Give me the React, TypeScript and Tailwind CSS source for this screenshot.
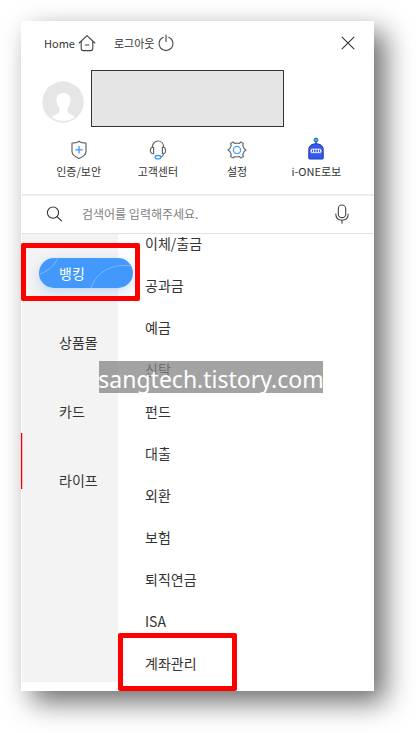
import React from "react";

const categories = ["뱅킹", "상품몰", "카드", "라이프"];

const menuItems = [
  "이체/출금",
  "공과금",
  "예금",
  "신탁",
  "펀드",
  "대출",
  "외환",
  "보험",
  "퇴직연금",
  "ISA",
  "계좌관리",
];

function HomeIcon() {
  return (
    <svg viewBox="0 0 18 18" className="h-[18px] w-[18px]" fill="none" stroke="#444" strokeWidth="1.100" strokeLinecap="round" strokeLinejoin="round">
      <path d="M1.200 9 9 1.600 16.800 9M3.200 7.400v7.200q0 2 2 2h7.600q2 0 2-2V7.400M7.200 11h3.800" />
    </svg>
  );
}

function PowerIcon() {
  return (
    <svg viewBox="0 0 18 18" className="h-[18px] w-[18px]" fill="none" stroke="#444" strokeWidth="1.100" strokeLinecap="round">
      <path d="M9 1v6.400M6.200 3.200a7 7 0 1 0 5.600 0" />
    </svg>
  );
}

function CloseIcon() {
  return (
    <svg viewBox="0 0 14 14" className="h-3.5 w-3.5" fill="none" stroke="#333" strokeWidth="1.100">
      <path d="m.8.8 12.400 12.400M13.200.8.8 13.200" />
    </svg>
  );
}

function Avatar() {
  return (
    <svg viewBox="0 0 42 42" className="h-[42px] w-[42px] shrink-0" aria-hidden="true">
      <circle cx="21" cy="21" r="20.700" fill="#e6e6e6" />
      <path
        d="M21.500 12c4.600 0 7 2.800 7 7 0 3.600-1 6-3 7.800v3.200c0 2 1.600 2.800 3.400 3.400 2 .8 3.200 1.400 4.200 2.600a19 19 0 0 1-23.200 0c1-1.200 2.200-1.800 4.200-2.600 1.800-.6 3.400-1.400 3.400-3.400v-3.200c-2-1.800-3-4.200-3-7.800 0-4.200 2.400-7 7-7z"
        fill="#fff"
      />
    </svg>
  );
}

function ShieldIcon() {
  return (
    <svg viewBox="0 0 22 22" className="h-[22px] w-[22px]" fill="none" strokeLinecap="round" strokeLinejoin="round">
      <path d="M11 2.200C9.800 3.600 7 4 4 4v8.500c0 4 4 5.700 7 7 3-1.300 7-3 7-7V4c-3 0-5.800-.4-7-1.800z" stroke="#666" strokeWidth="1.200" />
      <path d="M11 7.500v6.600M7.700 10.800h6.600" stroke="#3d97fb" strokeWidth="1.300" />
    </svg>
  );
}

function HeadsetIcon() {
  return (
    <svg viewBox="0 0 22 22" className="h-[22px] w-[22px]" fill="none" stroke="#666" strokeWidth="1.200" strokeLinecap="round" strokeLinejoin="round">
      <path d="M5.300 8.500C5.300 4.700 7.600 2 11 2s5.700 2.700 5.700 6.500" />
      <path d="M6.600 8.300v6.400c-2 .2-3.200-.8-3.200-3.200s1.200-3.400 3.200-3.200zM15.400 8.300v6.400c2 .2 3.200-.8 3.200-3.200s-1.200-3.400-3.200-3.200zM16.600 14.800c-.2 1.600-1 2.600-2.600 3" />
      <ellipse cx="11" cy="18.200" rx="2.900" ry="1.700" stroke="#3d97fb" strokeWidth="1.300" />
    </svg>
  );
}

function GearIcon() {
  return (
    <svg viewBox="0 0 22 22" className="h-[22px] w-[22px]" fill="none" strokeLinejoin="round">
      <path
        d="M7.200 3 8.700 4.500Q11 3.700 13.300 4.500L14.800 3 17.400 4.500 16.700 6.700Q17.600 7.700 17.900 9.200L20 11 17.900 12.800Q17.600 14.300 16.700 15.300L17.400 17.500 14.800 19 13.300 17.500Q11 18.300 8.700 17.500L7.200 19 4.600 17.500 5.300 15.300Q4.400 14.300 4.100 12.800L2 11 4.100 9.200Q4.400 7.700 5.300 6.700L4.600 4.500Z"
        stroke="#707070"
        strokeWidth="1.200"
      />
      <circle cx="11" cy="11" r="3.600" stroke="#4aa0fb" strokeWidth="1.300" />
    </svg>
  );
}

function RobotIcon() {
  return (
    <svg viewBox="0 0 22 24" className="-mt-0.5 h-6 w-[22px]" fill="none">
      <path d="M11 4v4" stroke="#273a9c" strokeWidth="1.400" />
      <circle cx="11" cy="3" r="1.900" fill="#36c5f2" stroke="#24509c" strokeWidth=".9" />
      <path d="M3.800 21.200V12.500c0-3.600 3-5.700 7.200-5.700s7.200 2.100 7.200 5.700v8.700q0 .8-.8.8H4.600q-.8 0-.8-.8z" fill="#3158f0" stroke="#2338b0" />
      <rect x="5" y="11.300" width="12" height="5.200" rx="2.600" fill="#dfe6ff" stroke="#2338b0" strokeWidth=".5" />
      <path d="M7.500 12.600v2.600M9.600 12.600v2.600M12.400 12.600v2.600M14.500 12.600v2.600M9.600 13.900h2.800" stroke="#3652dc" strokeWidth=".9" />
    </svg>
  );
}

function SearchIcon() {
  return (
    <svg viewBox="0 0 16 16" className="h-4 w-4" fill="none" stroke="#333" strokeWidth="1.100" strokeLinecap="round" aria-hidden="true">
      <circle cx="7" cy="6.600" r="5.600" />
      <path d="m11 10.600 4.400 4.200" />
    </svg>
  );
}

function MicIcon() {
  return (
    <svg viewBox="0 0 14 20" className="h-5 w-3.5" fill="none" stroke="#444" strokeWidth="1.100" strokeLinecap="round">
      <rect x="3.300" y="1" width="7.400" height="12.600" rx="3.700" />
      <path d="M.8 10c0 3.800 2.400 6.200 6.200 6.200s6.200-2.400 6.200-6.200M7 16.200v3" />
    </svg>
  );
}

const shortcuts = [
  { label: "인증/보안", icon: <ShieldIcon /> },
  { label: "고객센터", icon: <HeadsetIcon /> },
  { label: "설정", icon: <GearIcon /> },
  { label: "i-ONE로보", icon: <RobotIcon /> },
];

function ActiveCategory({ label }: { label: string }) {
  return (
    <button
      type="button"
      aria-current="true"
      className="relative z-10 ml-[17px] h-[30px] w-[94px] overflow-hidden rounded-full bg-[#4299fb] pl-5 text-left text-white shadow-[0_4px_12px_rgba(66,153,251,0.3)]"
    >
      <svg viewBox="0 0 94 30" className="absolute inset-0 h-full w-full" fill="none" stroke="#7cb9fc" aria-hidden="true">
        <path d="M1 16Q13 12 19 0M52 30C58 13 74 5 94 8" />
      </svg>
      <span className="relative">{label}</span>
    </button>
  );
}

export default function App() {
  return (
    <div className="bg-white pt-[21px] pr-[42px] pb-[42px] pl-[21px] font-['Noto_Sans_CJK_KR',sans-serif] text-[#333]">
      <main className="relative bg-white shadow-[11px_11px_26px_rgba(0,0,0,0.58)]">
        <header className="pt-3">
          <div className="flex h-5 items-center pr-[19px] pl-[23px] text-[11px]">
            <a href="#home" className="flex items-center gap-[3px]">
              Home
              <HomeIcon />
            </a>
            <button type="button" className="ml-[18px] flex items-center gap-[3px]">
              로그아웃
              <PowerIcon />
            </button>
            <button type="button" aria-label="닫기" className="ml-auto">
              <CloseIcon />
            </button>
          </div>

          <div className="mt-[17px] flex items-center gap-[7px] pr-[90px] pl-[21px]">
            <span className="pt-[7px]">
              <Avatar />
            </span>
            <div className="h-[57px] flex-1 border border-[#333] bg-[#e5e5e5]" />
          </div>

          <nav className="mt-3 grid grid-cols-4 px-[18px] pb-[15px]">
            {shortcuts.map((item) => (
              <button key={item.label} type="button" className="flex flex-col items-center gap-0.5 text-[11px] leading-4">
                {item.icon}
                {item.label}
              </button>
            ))}
          </nav>
        </header>

        <form className="ml-px flex h-10 items-center border-t-2 border-b border-t-[#ebebeb] border-b-[#e2e2e2] pr-[25px] pb-0.5 pl-6">
          <label htmlFor="search">
            <SearchIcon />
          </label>
          <input
            id="search"
            type="text"
            aria-label="검색"
            placeholder="검색어를 입력해주세요."
            className="ml-5 h-6 min-w-0 flex-1 bg-transparent text-xs outline-none placeholder:text-[#808080]"
          />
          <button type="button" aria-label="음성 검색">
            <MicIcon />
          </button>
        </form>

        <div className="flex text-sm leading-[19px]">
          <nav className="mb-[9px] ml-px flex w-24 shrink-0 flex-col gap-[39px] bg-[#f3f3f3] pt-6">
            {categories.map((label, index) =>
              index === 0 ? (
                <ActiveCategory key={label} label={label} />
              ) : (
                <button key={label} type="button" className="h-[30px] pl-[37px] text-left">
                  {label}
                </button>
              )
            )}
          </nav>
          <ul className="flex flex-1 flex-col gap-[21px] pb-4 pl-[27px]">
            {menuItems.map((label) => (
              <li key={label} className="h-[21px]">
                <a href="#menu" className="block">
                  {label}
                </a>
              </li>
            ))}
          </ul>
        </div>

        <div className="absolute top-[412px] left-0 h-14 w-0.5 border-r border-[#ffb0b0] bg-[#f00000]" />
        <div className="absolute top-[222px] left-0 z-20 h-[58px] w-[119px] rounded-xs border-[5px] border-[#ff0000]" />
        <div className="absolute bottom-0 left-[97px] h-[58px] w-[119px] rounded-xs border-[5px] border-[#ff0000]" />
        <p className="absolute top-[340px] left-[78px] flex h-8 w-[224px] items-center justify-center bg-[#848484]/75 pt-1 font-['Noto_Sans',sans-serif] text-[23px] leading-7 whitespace-nowrap text-white">
          sangtech.tistory.com
        </p>
      </main>
    </div>
  );
}
